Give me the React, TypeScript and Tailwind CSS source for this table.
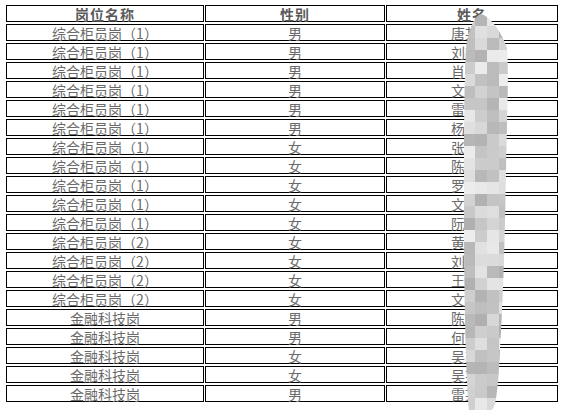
import React from 'react';

type Row = { post: string; sex: string; name: string };

const rows: Row[] = [
  { post: '综合柜员岗（1）', sex: '男', name: '唐某某' },
  { post: '综合柜员岗（1）', sex: '男', name: '刘某某' },
  { post: '综合柜员岗（1）', sex: '男', name: '肖某某' },
  { post: '综合柜员岗（1）', sex: '男', name: '文某某' },
  { post: '综合柜员岗（1）', sex: '男', name: '雷某某' },
  { post: '综合柜员岗（1）', sex: '男', name: '杨某某' },
  { post: '综合柜员岗（1）', sex: '女', name: '张某某' },
  { post: '综合柜员岗（1）', sex: '女', name: '陈某某' },
  { post: '综合柜员岗（1）', sex: '女', name: '罗某某' },
  { post: '综合柜员岗（1）', sex: '女', name: '文某某' },
  { post: '综合柜员岗（1）', sex: '女', name: '阮某某' },
  { post: '综合柜员岗（2）', sex: '女', name: '黄某某' },
  { post: '综合柜员岗（2）', sex: '女', name: '刘某某' },
  { post: '综合柜员岗（2）', sex: '女', name: '王某某' },
  { post: '综合柜员岗（2）', sex: '女', name: '文某某' },
  { post: '金融科技岗', sex: '男', name: '陈某某' },
  { post: '金融科技岗', sex: '男', name: '何某某' },
  { post: '金融科技岗', sex: '女', name: '吴某某' },
  { post: '金融科技岗', sex: '女', name: '吴某某' },
  { post: '金融科技岗', sex: '男', name: '雷某某' },
];

// mosaic blob covering the names
function Mosaic() {
  const cells: { x: number; y: number; c: string }[] = [];
  let seed = 7;
  const rnd = () => {
    seed = (seed * 9301 + 49297) % 233280;
    return seed / 233280;
  };
  for (let y = 0; y < 35; y++) {
    for (let x = 0; x < 5; x++) {
      const v = Math.round(176 + rnd() * 62);
      cells.push({ x: x * 12, y: y * 12, c: `rgb(${v},${v},${v})` });
    }
  }
  return (
    <svg width="64" height="410" className="absolute left-[455px] top-0">
      <defs>
        <clipPath id="blob">
          <path d="M26 14 C34 16 46 30 52 48 C54 70 52 120 51 170 C50 240 48 300 45 350 C43 395 40 410 36 410 L14 410 C11 380 9 300 9 220 C9 140 9 80 11 48 C14 28 20 15 26 14 Z" />
        </clipPath>
      </defs>
      <g clipPath="url(#blob)">
        {cells.map((c, i) => (
          <rect key={i} x={c.x + 8} y={c.y + 2} width="12" height="12" fill={c.c} />
        ))}
      </g>
    </svg>
  );
}

function Cell({ children, head }: { children: React.ReactNode; head?: boolean }) {
  return (
    <div
      className={`h-[17px] border border-black flex items-center justify-center leading-[14px] text-[14px] ${
        head ? 'font-bold tracking-[1px] text-[#5a5a5a]' : 'text-[#6a6a6a]'
      }`}
    >
      {children}
    </div>
  );
}

export default function App() {
  return (
    <div
      className="relative w-[571px] h-[410px] bg-white overflow-hidden pl-[6px] pt-[5px]"
      style={{ fontFamily: '"Noto Sans CJK SC", "Noto Sans", sans-serif' }}
    >
      <div className="grid grid-cols-[198px_180px_172px] gap-x-px gap-y-[2px]">
        <Cell head>岗位名称</Cell>
        <Cell head>性别</Cell>
        <Cell head>姓名</Cell>
        {rows.map((r, i) => (
          <React.Fragment key={i}>
            <Cell>{r.post}</Cell>
            <Cell>{r.sex}</Cell>
            <Cell>{r.name}</Cell>
          </React.Fragment>
        ))}
      </div>
      <Mosaic />
    </div>
  );
}
